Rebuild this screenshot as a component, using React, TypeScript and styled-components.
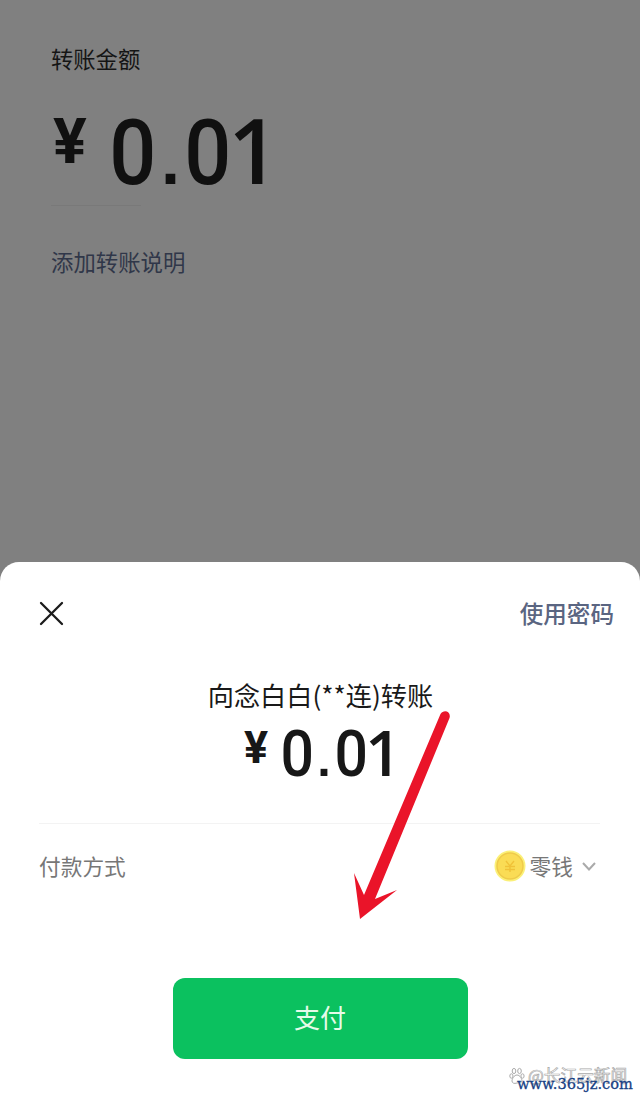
import React from "react";
import styled, { createGlobalStyle } from "styled-components";

const GlobalStyle = createGlobalStyle`
  * { box-sizing: border-box; }
  body { margin: 0; background: #808080; }
`;

const cjk = `"Noto Sans CJK SC", sans-serif`;

const Screen = styled.main`
  position: relative;
  width: 640px;
  height: 1099px;
  display: flex;
  flex-direction: column;
  overflow: hidden;
  background: #808080;
  font-family: ${cjk};
`;

const TransferPage = styled.section`
  height: 562px;
  padding: 42px 51px 0;
`;

const Label = styled.div`
  font-size: 22.3px;
  line-height: 32px;
  color: #151515;
`;

const Amount = styled.div<{ $size: number }>`
  display: flex;
  align-items: flex-start;
  font-family: Roboto, sans-serif;
  font-weight: 500;
  font-size: ${(p) => p.$size}px;
  line-height: 1;
  white-space: nowrap;
`;

const Currency = styled.span<{ $size: number; $width: number; $drop: number }>`
  width: ${(p) => p.$width}px;
  padding-top: ${(p) => p.$drop}px;
  font-size: ${(p) => p.$size}px;
  font-weight: 700;
  line-height: 1;
`;

const Digits = styled.span`
  display: flex;
  align-items: baseline;
  padding-top: 0.02em;
`;

const Zero = styled.span`
  display: flex;
  justify-content: center;
  width: 0.505em;
  transform: scaleX(0.92);
`;

const Point = styled.span`
  display: flex;
  justify-content: center;
  width: 0.437em;
  font-family: "Liberation Sans", sans-serif;
  font-weight: 700;
  font-size: 0.76em;
`;

const One = styled.span`
  font-family: "Open Sans", sans-serif;
  font-weight: 600;
  line-height: 0.8;
  margin-left: -0.03em;
`;

const PageAmount = styled(Amount)`
  margin-top: 33px;
  padding-left: 2px;
  height: 98px;
  color: #101010;
`;

const ShortRule = styled.div`
  width: 90px;
  height: 1px;
  background: #797979;
`;

const NoteLink = styled.div`
  margin-top: 39px;
  font-size: 22.4px;
  line-height: 32px;
  color: #303749;
`;

const Sheet = styled.section`
  flex: 1;
  display: flex;
  flex-direction: column;
  background: #fff;
  border-radius: 19px 19px 0 0;
`;

const SheetHeader = styled.header`
  display: flex;
  align-items: center;
  justify-content: space-between;
  height: 102px;
  padding: 0 26px 0 39px;
`;

const PasswordLink = styled.span`
  font-size: 23.6px;
  font-weight: 500;
  line-height: 34px;
  color: #5a6581;
`;

const Recipient = styled.div`
  margin-top: 12px;
  padding-left: 1px;
  font-size: 26.2px;
  line-height: 38px;
  text-align: center;
  color: #191919;
`;

const SheetAmount = styled(Amount)`
  margin: 8px 0 0 244px;
  height: 101px;
  color: #171717;
`;

const MethodRow = styled.div`
  display: flex;
  align-items: center;
  justify-content: space-between;
  margin: 0 43px 0 39px;
  height: 84px;
  font-size: 21.7px;
  line-height: 32px;
  color: #777;
`;

const Rule = styled.div`
  height: 1px;
  margin: 0 40px 0 39px;
  background: #f3f3f3;
`;

const MethodValue = styled.div`
  display: flex;
  align-items: center;
  gap: 4px;
`;

const PayButton = styled.button`
  align-self: center;
  width: 295px;
  height: 81px;
  margin-top: 70px;
  padding: 0 0 3px;
  border: 0;
  border-radius: 12px;
  background: #0bc15f;
  color: #e6fbe9;
  font-family: ${cjk};
  font-size: 26px;
  line-height: 38px;
`;

const Pointer = styled.svg`
  position: absolute;
  left: 340px;
  top: 700px;
`;

const SourceMark = styled.div`
  position: absolute;
  left: 509px;
  top: 1063px;
  display: flex;
  align-items: center;
  gap: 3px;
  font-size: 16.7px;
  line-height: 25px;
  color: #fff;
  -webkit-text-stroke: 0.7px #aaa;
  white-space: nowrap;
`;

const SiteMark = styled.div`
  position: absolute;
  left: 517px;
  top: 1074px;
  font-family: "DejaVu Serif", serif;
  font-size: 14.6px;
  line-height: 20px;
  color: #174184;
  -webkit-text-stroke: 0.3px #174184;
  white-space: nowrap;
`;

const CloseIcon = () => (
  <svg width="25" height="25" viewBox="0 0 25 25" fill="none" stroke="#1b1b1b" strokeWidth="2.3" strokeLinecap="round">
    <path d="M2 2L23 23M23 2L2 23" />
  </svg>
);

const CoinIcon = () => (
  <svg width="32" height="32" viewBox="0 0 32 32" fill="none">
    <circle cx="16" cy="16" r="15.5" fill="#fbf078" />
    <circle cx="16" cy="16" r="13" fill="#fadc55" stroke="#efcb4a" strokeWidth="1.5" />
    <path d="M12 11L16 16L20 11M16 16V22M11 16.5H21M11 19.5H21" stroke="#f0c238" strokeWidth="1.4" />
  </svg>
);

const ChevronIcon = () => (
  <svg width="20" height="14" viewBox="0 0 20 14" fill="none" stroke="#aaa" strokeWidth="2">
    <path d="M6 4L12 10.5L18 4" />
  </svg>
);

const PawIcon = () => (
  <svg width="16" height="18" viewBox="0 0 16 18" fill="#fff" stroke="#aaa" strokeWidth="1">
    <ellipse cx="5" cy="4" rx="1.8" ry="2.6" />
    <ellipse cx="10.5" cy="4" rx="1.8" ry="2.6" />
    <ellipse cx="2.4" cy="9" rx="1.6" ry="2.2" />
    <ellipse cx="13.5" cy="9" rx="1.6" ry="2.2" />
    <path d="M8 8C5 8 3 12 3 14S5 17 8 16S13 16 13 14S11 8 8 8Z" />
  </svg>
);

const Value = () => (
  <Digits>
    <Zero>0</Zero>
    <Point>.</Point>
    <Zero>0</Zero>
    <One>1</One>
  </Digits>
);

export default function App() {
  return (
    <Screen>
      <GlobalStyle />
      <TransferPage>
        <Label>转账金额</Label>
        <PageAmount $size={90}>
          <Currency $size={63} $width={57} $drop={3}>¥</Currency>
          <Value />
        </PageAmount>
        <ShortRule />
        <NoteLink>添加转账说明</NoteLink>
      </TransferPage>
      <Sheet>
        <SheetHeader>
          <CloseIcon />
          <PasswordLink>使用密码</PasswordLink>
        </SheetHeader>
        <Recipient>向念白白(**连)转账</Recipient>
        <SheetAmount $size={64}>
          <Currency $size={45} $width={37} $drop={3}>¥</Currency>
          <Value />
        </SheetAmount>
        <Rule />
        <MethodRow>
          <span>付款方式</span>
          <MethodValue>
            <CoinIcon />
            <span>零钱</span>
            <ChevronIcon />
          </MethodValue>
        </MethodRow>
        <PayButton>支付</PayButton>
      </Sheet>
      <Pointer width="130" height="230" viewBox="0 0 130 230">
        <path
          d="M100.5 14L24 195L14 173L20 219L57 190L35 199L109.5 18C111.5 11 103.5 9 100.5 14Z"
          fill="#ea1429"
        />
      </Pointer>
      <SourceMark>
        <PawIcon />
        <span>@长江云新闻</span>
      </SourceMark>
      <SiteMark>www.365jz.com</SiteMark>
    </Screen>
  );
}
